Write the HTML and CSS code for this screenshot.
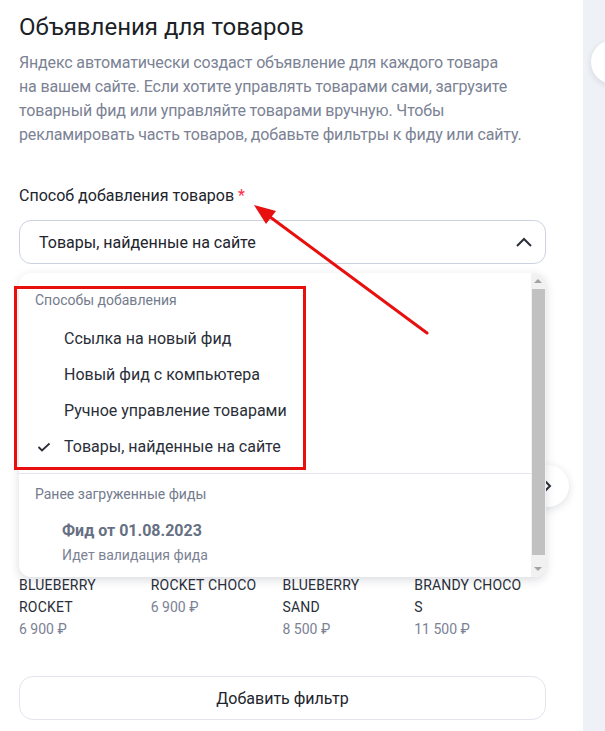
FILE: index.html
```html
<!DOCTYPE html>
<html lang="ru">
<head>
  <meta charset="UTF-8" />
  <title>Объявления для товаров</title>
  <meta name="viewport" content="width=device-width, initial-scale=1.0" />
  <link rel="stylesheet" href="styles.css">
</head>
<body>

<div class="page">
  <div class="main">
    <h1 class="title">Объявления для товаров</h1>
    <p class="lead">
      Яндекс автоматически создаст объявление для каждого товара<br>
      на вашем сайте. Если хотите управлять товарами сами, загрузите<br>
      товарный фид или управляйте товарами вручную. Чтобы<br>
      рекламировать часть товаров, добавьте фильтры к фиду или сайту.
    </p>

    <div class="field">
      <div class="label">Способ добавления товаров <span class="req">*</span></div>

      <div class="select">
        <span>Товары, найденные на сайте</span>
        <svg class="chevron" width="18" height="12" viewBox="0 0 18 12">
          <path d="M2 10 L9 3 L16 10" fill="none" stroke="#2b2f3a" stroke-width="2"/>
        </svg>
      </div>

      <!-- Carousel with goods (partly under the open menu) -->
      <div class="carousel">
        <div class="card">
          <div class="thumb"></div>
          <div class="name">BLUEBERRY ROCKET</div>
          <div class="price">6 900 ₽</div>
        </div>
        <div class="card">
          <div class="thumb"></div>
          <div class="name">ROCKET CHOCO</div>
          <div class="price">6 900 ₽</div>
        </div>
        <div class="card">
          <div class="thumb"></div>
          <div class="name">BLUEBERRY SAND</div>
          <div class="price">8 500 ₽</div>
        </div>
        <div class="card">
          <div class="thumb"></div>
          <div class="name">BRANDY CHOCO S</div>
          <div class="price">11 500 ₽</div>
        </div>
        <div class="next">
          <svg width="10" height="14" viewBox="0 0 10 14">
            <path d="M2 2 L7 7 L2 12" fill="none" stroke="#2b2f3a" stroke-width="2"/>
          </svg>
        </div>
      </div>

      <!-- Open menu -->
      <div class="menu">
        <div class="menu-list">
          <div class="group">
            <div class="group-title">Способы добавления</div>
            <div class="option">Ссылка на новый фид</div>
            <div class="option">Новый фид с компьютера</div>
            <div class="option">Ручное управление товарами</div>
            <div class="option checked">
              <svg class="check" width="14" height="10" viewBox="0 0 14 10">
                <path d="M1.5 5 L5 8.5 L12.5 1.5" fill="none" stroke="#2b2f3a" stroke-width="1.8"/>
              </svg>
              Товары, найденные на сайте
            </div>
          </div>
          <div class="group second">
            <div class="group-title">Ранее загруженные фиды</div>
            <div class="feed">
              <div class="feed-name">Фид от 01.08.2023</div>
              <div class="feed-status">Идет валидация фида</div>
            </div>
          </div>
        </div>
        <div class="scrollbar">
          <div class="sb-up"></div>
          <div class="sb-thumb"></div>
          <div class="sb-down"></div>
        </div>
      </div>
    </div>

    <button class="add-filter">Добавить фильтр</button>

    <!-- annotations -->
    <div class="mark-box"></div>
    <svg class="mark-arrow" width="605" height="731" viewBox="0 0 605 731">
      <line x1="427" y1="333" x2="262" y2="211" stroke="#e8100f" stroke-width="3" stroke-linecap="round"/>
      <path d="M254 205 L276 211 L266 224 Z" fill="#e8100f"/>
    </svg>
  </div>

  <div class="side">
    <div class="side-btn"></div>
  </div>
</div>

</body>
</html>
```

FILE: styles.css
```css
* {
  box-sizing: border-box;
}

html, body {
  margin: 0;
  padding: 0;
  width: 605px;
  height: 731px;
  overflow: hidden;
  font-family: Roboto, 'Noto Sans', sans-serif;
  color: #21242c;
  background: #fff;
}

.page {
  display: flex;
  height: 100%;
}

.main {
  position: relative;
  width: 583px;
  flex-shrink: 0;
  padding: 12px 37px 0 19px;
  background: #fff;
}

.side {
  position: relative;
  flex: 1;
  background: #eef1f6;
  overflow: hidden;
}

.side-btn {
  position: absolute;
  top: 40px;
  left: 8px;
  width: 44px;
  height: 44px;
  border-radius: 50%;
  background: #fff;
  box-shadow: 0 2px 6px rgba(30, 40, 70, 0.12);
}

.title {
  margin: 0;
  font-size: 24px;
  line-height: 30px;
  font-weight: 400;
  color: #1c1f27;
}

.lead {
  margin: 9px 0 0;
  font-size: 16px;
  line-height: 24px;
  letter-spacing: -0.15px;
  color: #7b8294;
}

.field {
  position: relative;
  margin-top: 38px;
}

.label {
  font-size: 16px;
  line-height: 22px;
  color: #21242c;
}

.req {
  color: #ff2c4a;
}

.select {
  margin-top: 13px;
  height: 44px;
  border: 1px solid #ccd3df;
  border-radius: 12px;
  padding: 0 12px 0 19px;
  display: flex;
  align-items: center;
  justify-content: space-between;
  font-size: 16px;
}

.carousel {
  position: relative;
  display: flex;
  margin-top: 8px;
}

.card {
  width: 132px;
  padding-right: 22px;
}

.thumb {
  height: 302px;
}

.name {
  font-size: 14px;
  line-height: 22px;
  letter-spacing: 0.2px;
  color: #2a2e38;
}

.price {
  font-size: 14px;
  line-height: 22px;
  color: #7b8294;
}

.next {
  position: absolute;
  top: 193px;
  right: -23px;
  width: 42px;
  height: 42px;
  border-radius: 50%;
  background: #fff;
  box-shadow: 0 2px 8px rgba(30, 40, 70, 0.15);
  display: flex;
  align-items: center;
  justify-content: center;
}

.menu {
  position: absolute;
  top: 88px;
  left: 0;
  right: 0;
  height: 304px;
  background: #fff;
  border-radius: 12px;
  box-shadow: 0 3px 10px rgba(30, 40, 70, 0.16);
  overflow: hidden;
  display: flex;
}

.menu-list {
  flex: 1;
}

.group {
  padding: 17px 0 8px;
}

.group.second {
  border-top: 1px solid #e3e6ec;
  padding-top: 10px;
}

.group-title {
  padding-left: 16px;
  font-size: 14px;
  line-height: 20px;
  color: #737b8c;
  margin-bottom: 11px;
}

.option {
  position: relative;
  padding-left: 45px;
  font-size: 16px;
  line-height: 36px;
  color: #2a2e38;
}

.check {
  position: absolute;
  left: 18px;
  top: 13px;
}

.feed {
  padding: 5px 0 0 43px;
}

.feed-name {
  font-size: 16px;
  line-height: 22px;
  font-weight: 700;
  color: #667082;
}

.feed-status {
  margin-top: 4px;
  font-size: 14px;
  line-height: 18px;
  color: #7b8294;
}

.scrollbar {
  width: 15px;
  background: #f1f1f1;
  display: flex;
  flex-direction: column;
  align-items: center;
}

.sb-up, .sb-down {
  height: 16px;
  width: 15px;
  position: relative;
}

.sb-up::after, .sb-down::after {
  content: "";
  position: absolute;
  left: 3px;
  border-left: 4px solid transparent;
  border-right: 4px solid transparent;
}

.sb-up::after {
  top: 6px;
  border-bottom: 4px solid #a3a3a3;
}

.sb-down::after {
  top: 6px;
  border-top: 4px solid #a3a3a3;
}

.sb-thumb {
  flex: 1;
  width: 13px;
  background: #c1c1c1;
  margin: 0 0 6px;
}

.add-filter {
  display: block;
  width: 100%;
  margin-top: 36px;
  height: 44px;
  border: 1px solid #e2e5ee;
  border-radius: 14px;
  background: #fff;
  font-family: inherit;
  font-size: 16px;
  color: #21242c;
}

.mark-box {
  position: absolute;
  left: 14px;
  top: 286px;
  width: 292px;
  height: 184px;
  border: 3px solid #e8100f;
}

.mark-arrow {
  position: absolute;
  left: 0;
  top: 0;
  pointer-events: none;
}
```
